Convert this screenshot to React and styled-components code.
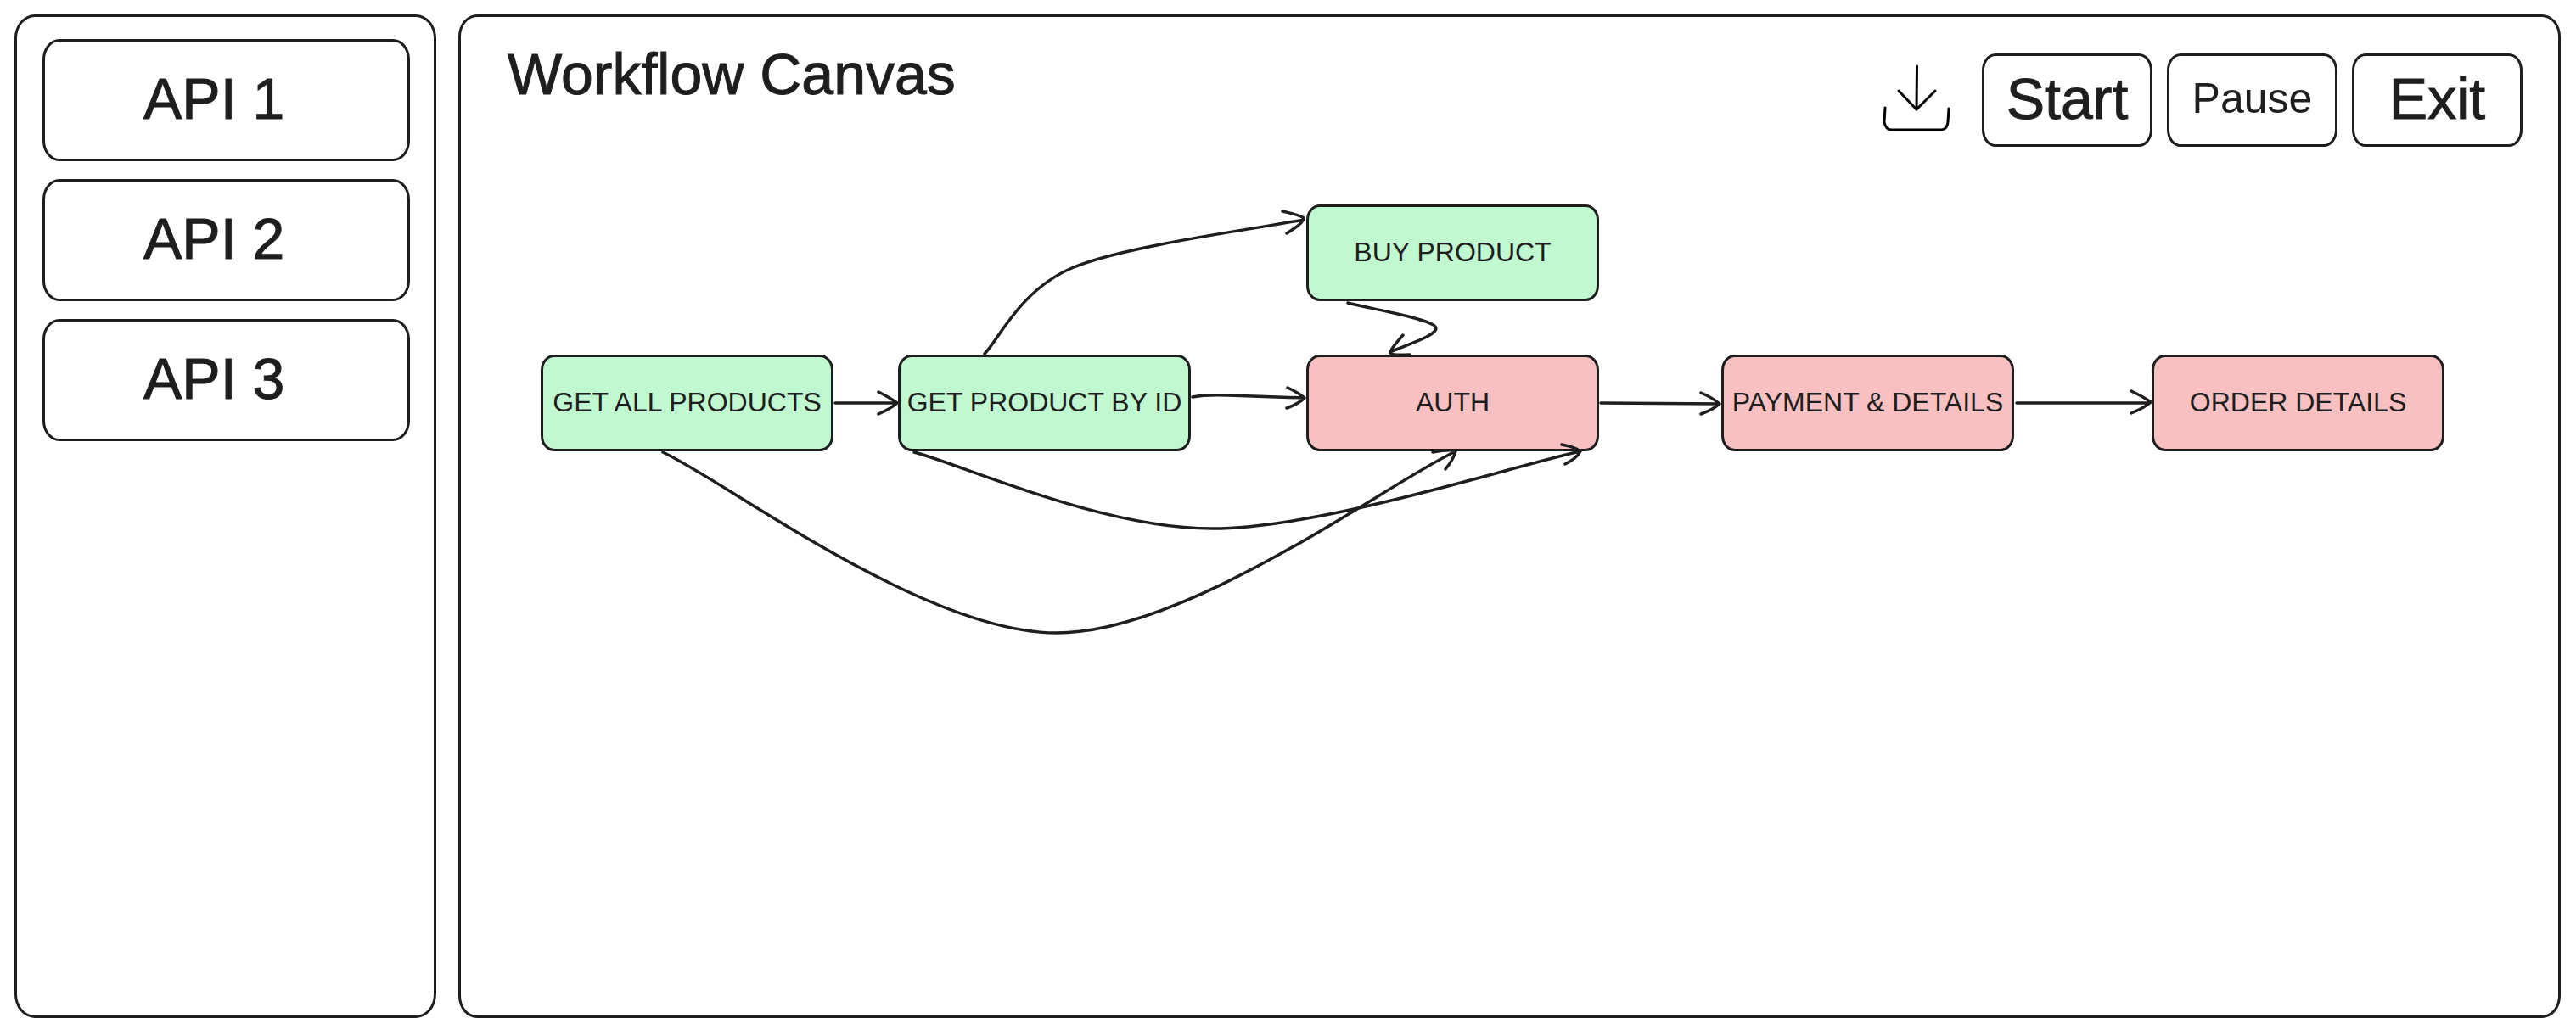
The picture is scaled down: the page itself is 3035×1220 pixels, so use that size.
import React from "react";
import styled, { createGlobalStyle } from "styled-components";

const INK = "#1e1e1e";

const GlobalStyle = createGlobalStyle`
  *, *::before, *::after { box-sizing: border-box; }
  body {
    margin: 0;
    background: #ffffff;
    color: ${INK};
    font-family: "Liberation Sans", Arial, sans-serif;
  }
  button { font-family: inherit; color: inherit; cursor: pointer; }
`;

const Page = styled.div`
  display: flex;
  gap: 26px;
  min-height: 100vh;
  padding: 17px 18px 20px 17px;
`;

const Sidebar = styled.aside`
  flex: 0 0 497px;
  padding: 26px 28px 26px 30px;
  border: 3px solid ${INK};
  border-radius: 24px / 28px;
`;

const ApiList = styled.ul`
  display: flex;
  flex-direction: column;
  gap: 21px;
  margin: 0;
  padding: 0;
  list-style: none;
`;

const ApiButton = styled.button`
  display: flex;
  align-items: center;
  width: 100%;
  height: 144px;
  padding: 0 20px 4px 116px;
  border: 3px solid ${INK};
  border-radius: 20px / 24px;
  background: #ffffff;
  font-size: 68px;
  line-height: 80px;
  -webkit-text-stroke: 1px ${INK};
`;

const Canvas = styled.main`
  flex: 1;
  min-width: 0;
  display: flex;
  flex-direction: column;
  border: 3px solid ${INK};
  border-radius: 22px / 26px;
`;

const Header = styled.header`
  display: flex;
  justify-content: space-between;
  align-items: flex-start;
  padding: 27px 42px 0 55px;
`;

const Title = styled.h1`
  margin: 0;
  font-size: 68px;
  line-height: 80px;
  font-weight: 400;
  -webkit-text-stroke: 1px ${INK};
`;

const Toolbar = styled.div`
  display: flex;
  align-items: center;
  gap: 17px;
  padding-top: 16px;
`;

const IconButton = styled.button`
  width: 80px;
  height: 84px;
  margin-right: 20px;
  padding: 0;
  border: 0;
  background: none;

  svg { display: block; }
`;

const ActionButton = styled.button`
  width: 201px;
  height: 110px;
  padding: 0 0 4px;
  border: 3px solid ${INK};
  border-radius: 16px / 20px;
  background: #ffffff;
  font-size: ${(p) => (p.$small ? 50 : 68)}px;
  line-height: 80px;
  -webkit-text-stroke: ${(p) => (p.$small ? 0 : 1)}px ${INK};
`;

const Diagram = styled.section`
  position: relative;
  flex: 1;
`;

const Edges = styled.svg`
  position: absolute;
  inset: 0;
  width: 100%;
  height: 100%;
  fill: none;
  stroke: ${INK};
  stroke-width: 3.5;
  stroke-linecap: round;
  stroke-linejoin: round;
`;

const FILLS = { ready: "#c0f8d0", locked: "#f8c0c0" };

const Node = styled.div`
  position: absolute;
  left: ${(p) => p.$x}px;
  top: ${(p) => p.$y}px;
  display: flex;
  align-items: center;
  justify-content: center;
  width: 345px;
  height: 114px;
  padding-bottom: 2px;
  border: 3px solid ${INK};
  border-radius: 16px / 18px;
  background: ${(p) => FILLS[p.$state]};
  font-size: 32px;
  line-height: 40px;
  white-space: nowrap;
`;

const apis = ["API 1", "API 2", "API 3"];

const nodes = [
  { label: "GET ALL PRODUCTS", x: 94, y: 245, state: "ready" },
  { label: "GET PRODUCT BY ID", x: 515, y: 245, state: "ready" },
  { label: "BUY PRODUCT", x: 996, y: 68, state: "ready" },
  { label: "AUTH", x: 996, y: 245, state: "locked" },
  { label: "PAYMENT & DETAILS", x: 1485, y: 245, state: "locked" },
  { label: "ORDER DETAILS", x: 1992, y: 245, state: "locked" },
];

// Each edge is its line followed by the two arms of its arrow head.
const edges = [
  "M441 302L514 302M492 289Q506 296 514 302Q506 309 492 315",
  "M617 244C634 227 659 168 722 142C785 116 948 95 993 86M968 76Q990 81 993 84Q993 90 973 102",
  "M862 295Q878 292 904 293L994 296M974 284Q987 290 994 296Q987 303 973 308",
  "M1343 302L1483 303M1461 290Q1475 296 1483 303Q1475 310 1461 315",
  "M1833 302L1990 302M1968 288Q1983 295 1991 301Q1983 308 1968 314",
  "M1045 184C1062 189 1140 202 1148 212C1156 222 1103 237 1095 242M1110 222Q1094 240 1095 243Q1097 246 1118 245",
  "M238 360C315 396 546 573 702 573C858 573 1094 395 1172 359M1145 360Q1160 357 1172 358Q1170 368 1160 380",
  "M534 360C592 375 754 450 885 450C1016 450 1247 374 1319 359M1297 351Q1313 354 1319 359Q1315 367 1301 374",
];

function DownloadIcon() {
  return (
    <svg
      width="80"
      height="84"
      viewBox="0 0 80 84"
      fill="none"
      stroke="#000000"
      strokeWidth="3"
      strokeLinecap="round"
      strokeLinejoin="round"
      aria-hidden="true"
    >
      <path d="M40.5 2L40 53" />
      <path d="M19 31L40 53L62 31" />
      <path d="M3 51L2 68Q4 77 10 77L70 77Q76 76 77 68L78 52" />
    </svg>
  );
}

export default function App() {
  return (
    <>
      <GlobalStyle />
      <Page>
        <Sidebar aria-label="APIs">
          <ApiList>
            {apis.map((name) => (
              <li key={name}>
                <ApiButton type="button">{name}</ApiButton>
              </li>
            ))}
          </ApiList>
        </Sidebar>
        <Canvas>
          <Header>
            <Title>Workflow Canvas</Title>
            <Toolbar>
              <IconButton type="button" aria-label="Download">
                <DownloadIcon />
              </IconButton>
              <ActionButton type="button">Start</ActionButton>
              <ActionButton type="button" $small>Pause</ActionButton>
              <ActionButton type="button">Exit</ActionButton>
            </Toolbar>
          </Header>
          <Diagram>
            {nodes.map((n) => (
              <Node key={n.label} $x={n.x} $y={n.y} $state={n.state}>
                {n.label}
              </Node>
            ))}
            <Edges aria-hidden="true">
              {edges.map((d) => (
                <path key={d} d={d} />
              ))}
            </Edges>
          </Diagram>
        </Canvas>
      </Page>
    </>
  );
}
